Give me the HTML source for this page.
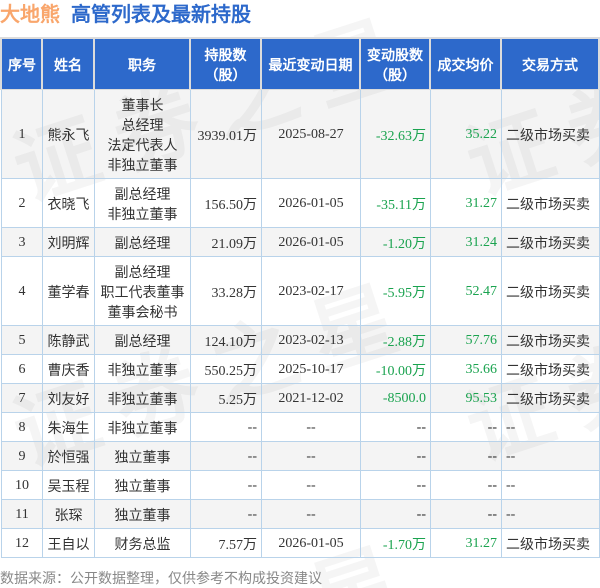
<!DOCTYPE html>
<html><head><meta charset="utf-8">
<style>
html,body{margin:0;padding:0;background:#fff;height:588px;overflow:hidden}
#p{position:relative;width:600px;height:588px;overflow:hidden;font-family:"Liberation Serif","WenQuanYi Zen Hei",serif;font-size:14px;color:#333;background:#fff;filter:blur(.3px)}
.t{position:absolute;top:1px;font-family:"Liberation Sans","WenQuanYi Zen Hei",sans-serif;font-weight:bold;white-space:nowrap;line-height:28px;font-size:20px}
#wm{position:absolute;left:0;top:0;overflow:hidden}
#hb{position:absolute;left:0;top:37px;width:600px;height:53px;background:#dcdcdc}
.h{position:absolute;box-sizing:border-box;padding-top:2px;top:39px;height:50px;background:#2d69cb;color:#fff;font-weight:bold;text-align:center;font-family:"Liberation Sans","WenQuanYi Zen Hei",sans-serif;line-height:20px;display:flex;align-items:center;justify-content:center}
table{position:absolute;left:1px;top:90px;width:599px;table-layout:fixed;border-collapse:separate;border-spacing:0}
td{box-sizing:border-box;border-left:1px solid #b9d3ea;border-bottom:1px solid #b9d3ea;padding:5px 4px 3px;line-height:20px;text-align:center;vertical-align:middle;white-space:nowrap}
td:last-child{border-right:1px solid #b9d3ea;text-align:left}
td:nth-child(4),td:nth-child(6),td:nth-child(7){text-align:right}
tr:nth-child(odd) td{background:rgba(0,0,0,.045)}
td:nth-child(6),td:nth-child(7){color:#1aa34f}
td.c{padding:7px 4px 1px}
.d{color:#222!important}
#f{position:absolute;left:0;top:568px;height:20px;color:#888;line-height:20px;font-family:"Liberation Sans","WenQuanYi Zen Hei",sans-serif;white-space:nowrap}
</style></head><body><div id="p">
<svg id="wm" width="600" height="588" viewBox="0 0 600 588" font-family="WenQuanYi Zen Hei,sans-serif" font-size="84" font-weight="bold" fill="#f5f5f5" letter-spacing="20">
<text transform="translate(26,201) rotate(-18)">证券之星</text>
<text transform="translate(26,466) rotate(-18)">证券之星</text>
<text transform="translate(323,632) rotate(-18)">星</text>
<text transform="translate(479,195) rotate(-18)">证券</text>
<text transform="translate(479,460) rotate(-18)">证券</text>
</svg>
<div class="t" style="left:0;color:#f9a66c">大地熊</div>
<div class="t" style="left:71px;color:#2d69cb">高管列表及最新持股</div>
<div id="hb"></div>
<div class="h" style="left:2px;width:39px;padding-left:1px">序号</div>
<div class="h" style="left:43px;width:50px">姓名</div>
<div class="h" style="left:95px;width:94px">职务</div>
<div class="h" style="left:191px;width:69px">持股数<br>（股）</div>
<div class="h" style="left:262px;width:97px">最近变动日期</div>
<div class="h" style="left:361px;width:68px">变动股数<br>（股）</div>
<div class="h" style="left:431px;width:69px">成交均价</div>
<div class="h" style="left:502px;width:96px">交易方式</div>
<table>
<colgroup><col style="width:41px"><col style="width:52px"><col style="width:96px"><col style="width:71px"><col style="width:99px"><col style="width:70px"><col style="width:71px"><col style="width:99px"></colgroup>
<tr><td>1</td><td class="c">熊永飞</td><td class="c">董事长<br>总经理<br>法定代表人<br>非独立董事</td><td class="c">3939.01万</td><td>2025-08-27</td><td class="c">-32.63万</td><td>35.22</td><td class="c">二级市场买卖</td></tr>
<tr><td>2</td><td class="c">衣晓飞</td><td class="c">副总经理<br>非独立董事</td><td class="c">156.50万</td><td>2026-01-05</td><td class="c">-35.11万</td><td>31.27</td><td class="c">二级市场买卖</td></tr>
<tr><td>3</td><td class="c">刘明辉</td><td class="c">副总经理</td><td class="c">21.09万</td><td>2026-01-05</td><td class="c">-1.20万</td><td>31.24</td><td class="c">二级市场买卖</td></tr>
<tr><td>4</td><td class="c">董学春</td><td class="c">副总经理<br>职工代表董事<br>董事会秘书</td><td class="c">33.28万</td><td>2023-02-17</td><td class="c">-5.95万</td><td>52.47</td><td class="c">二级市场买卖</td></tr>
<tr><td>5</td><td class="c">陈静武</td><td class="c">副总经理</td><td class="c">124.10万</td><td>2023-02-13</td><td class="c">-2.88万</td><td>57.76</td><td class="c">二级市场买卖</td></tr>
<tr><td>6</td><td class="c">曹庆香</td><td class="c">非独立董事</td><td class="c">550.25万</td><td>2025-10-17</td><td class="c">-10.00万</td><td>35.66</td><td class="c">二级市场买卖</td></tr>
<tr><td>7</td><td class="c">刘友好</td><td class="c">非独立董事</td><td class="c">5.25万</td><td>2021-12-02</td><td>-8500.0</td><td>95.53</td><td class="c">二级市场买卖</td></tr>
<tr><td>8</td><td class="c">朱海生</td><td class="c">非独立董事</td><td>--</td><td>--</td><td class="d">--</td><td class="d">--</td><td>--</td></tr>
<tr><td>9</td><td class="c">於恒强</td><td class="c">独立董事</td><td>--</td><td>--</td><td class="d">--</td><td class="d">--</td><td>--</td></tr>
<tr><td>10</td><td class="c">吴玉程</td><td class="c">独立董事</td><td>--</td><td>--</td><td class="d">--</td><td class="d">--</td><td>--</td></tr>
<tr><td>11</td><td class="c">张琛</td><td class="c">独立董事</td><td>--</td><td>--</td><td class="d">--</td><td class="d">--</td><td>--</td></tr>
<tr><td>12</td><td class="c">王自以</td><td class="c">财务总监</td><td class="c">7.57万</td><td>2026-01-05</td><td class="c">-1.70万</td><td>31.27</td><td class="c">二级市场买卖</td></tr>
</table>
<div id="f">数据来源：公开数据整理，仅供参考不构成投资建议</div>
</div></body></html>
